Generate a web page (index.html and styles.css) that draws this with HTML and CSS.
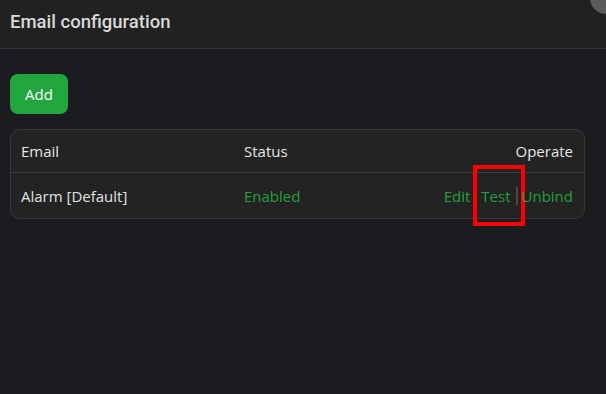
FILE: index.html
```html
<!DOCTYPE html>
<html lang="en">
<head>
  <meta charset="UTF-8" />
  <title>Email configuration</title>
  <link rel="stylesheet" href="styles.css">
</head>
<body>

<div class="header">
  <h1>Email configuration</h1>
  <span class="close-dot"></span>
</div>

<div class="content">
  <button class="btn-add">Add</button>

  <div class="table">
    <div class="row head">
      <span class="col-email">Email</span>
      <span class="col-status">Status</span>
      <span class="col-op">Operate</span>
    </div>
    <div class="row">
      <span class="col-email">Alarm [Default]</span>
      <span class="col-status green">Enabled</span>
      <span class="col-op ops">
        <a>Edit</a><i class="sep"></i><a class="test">Test<b class="mark"></b></a><i class="sep"></i><a>Unbind</a>
      </span>
    </div>
  </div>
</div>

</body>
</html>
```

FILE: styles.css
```css
* { margin: 0; padding: 0; box-sizing: border-box; }

body {
  font-family: "Open Sans", "Noto Sans", sans-serif;
  background: #1b1c1f;
  color: #e2e2e2;
  width: 606px;
  height: 394px;
  overflow: hidden;
}

.header {
  position: relative;
  height: 49px;
  background: #212121;
  border-bottom: 1px solid #353535;
  display: flex;
  align-items: center;
  padding: 0 10px 4px;
}

.header h1 {
  font-family: Roboto, sans-serif;
  font-weight: 500;
  font-size: 18.5px;
  color: #d9d9d9;
}

/* half-hidden close button in the corner */
.close-dot {
  position: absolute;
  right: -16px;
  top: -18px;
  width: 32px;
  height: 32px;
  border-radius: 50%;
  background: #5b5b5b;
}

.content {
  padding: 25px 10px;
}

.btn-add {
  display: block;
  width: 58px;
  height: 40px;
  border: none;
  border-radius: 8px;
  background: #22a73f;
  color: #fff;
  font-family: "Open Sans", sans-serif;
  font-size: 15px;
  font-weight: 500;
  cursor: pointer;
}

.table {
  width: 575px;
  margin-top: 15px;
  background: #232323;
  border: 1px solid #3a3a3a;
  border-radius: 10px;
}

.row {
  display: flex;
  align-items: center;
  height: 45px;
  padding: 0 11px 0 10px;
  font-size: 15px;
}

.row.head {
  height: 43px;
  border-bottom: 1px solid #3c3c3c;
  color: #e6e6e6;
}

.col-email { width: 223px; }
.col-status { width: 160px; }
.col-op { flex: 1; text-align: right; }

.green { color: #22a03a; }

.ops {
  display: flex;
  justify-content: flex-end;
  align-items: center;
  color: #22a03a;
}

.ops a { position: relative; }

.sep {
  display: inline-block;
  width: 2px;
  height: 18px;
  margin: 0 4px 0 5px;
  background: #4a4a4a;
}

.mark {
  position: absolute;
  left: -8px;
  top: -21px;
  width: 52px;
  height: 61px;
  border: 4px solid #ff0000;
}
```
